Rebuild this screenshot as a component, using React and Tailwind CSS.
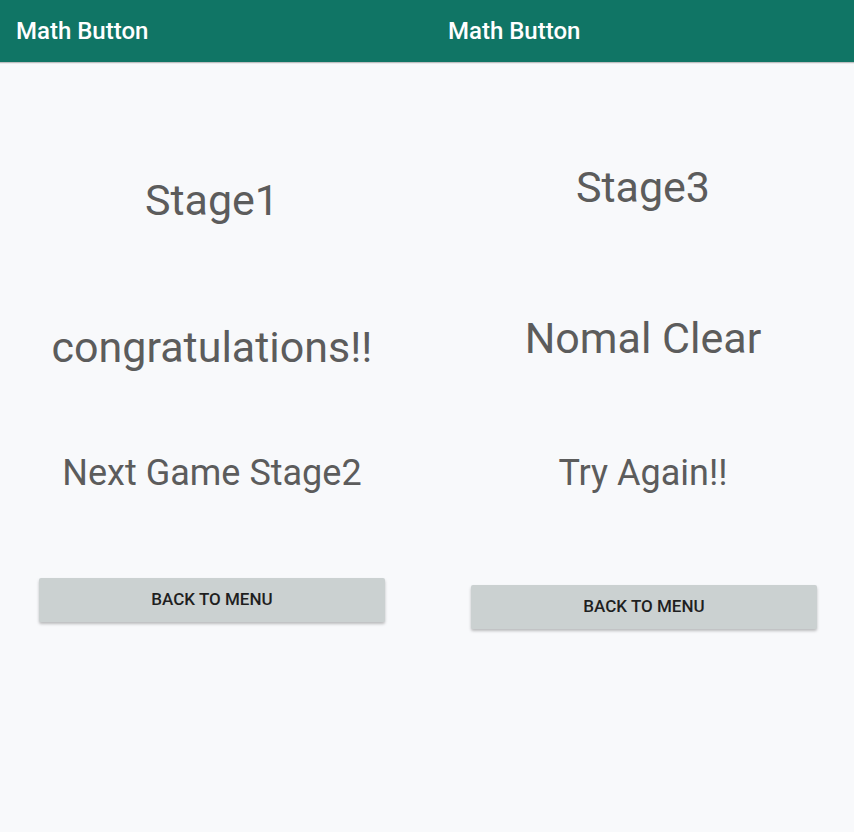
export default function App() {
  const screens = [
    {
      title: "Stage1",
      titleTop: "mt-[112px]",
      mid: "congratulations!!",
      midTop: "mt-[95px]",
      next: "Next Game Stage2",
      nextTop: "mt-[78px]",
      btnTop: "mt-[83px]",
      w: "w-[432px]",
      body: "pr-2",
      btnPad: "pl-[39px] pr-[47px]",
    },
    {
      title: "Stage3",
      titleTop: "mt-[99px]",
      mid: "Nomal Clear",
      midTop: "mt-[99px]",
      next: "Try Again!!",
      nextTop: "mt-[87px]",
      btnTop: "mt-[90px]",
      w: "flex-1",
      body: "",
      btnPad: "pl-[39px] pr-[37px]",
    },
  ];

  return (
    <div className="w-[854px] h-[832px] flex bg-[#f8f9fb] font-['Roboto',sans-serif] overflow-hidden">
      {screens.map((s, i) => (
        <div key={i} className={`${s.w} flex flex-col`}>
          {/* app bar */}
          <div className="h-[62px] bg-[#107565] flex items-center px-4 shadow-[0_1px_0_rgba(0,0,0,0.18),0_2px_0_rgba(0,0,0,0.06)]">
            <span className="text-white text-[24px] font-medium">Math Button</span>
          </div>

          <div className={`${s.body} flex flex-col text-center text-[#5c5c5c]`}>
            <div className={`${s.titleTop} text-[43px] leading-[52px]`}>{s.title}</div>
            <div className={`${s.midTop} text-[43px] leading-[52px]`}>{s.mid}</div>
            <div className={`${s.nextTop} text-[36px] leading-[44px]`}>{s.next}</div>
          </div>

          <div className={`${s.btnTop} ${s.btnPad}`}>
            <button className="w-full h-[44px] bg-[#cbd1d1] rounded-[2px] shadow-[0_2px_3px_rgba(0,0,0,0.25)] text-[17px] font-medium text-[#1f1f1f] uppercase">
              Back to menu
            </button>
          </div>
        </div>
      ))}
    </div>
  );
}
